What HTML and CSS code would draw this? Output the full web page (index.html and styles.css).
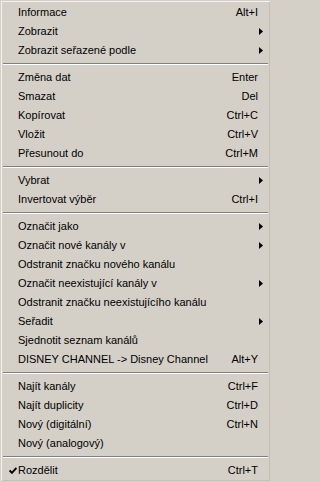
FILE: index.html
```
<!DOCTYPE html>
<html>
<head>
<meta charset="utf-8">
<link rel="stylesheet" href="styles.css">
</head>
<body>
<div class="menu">
  <div class="item"><span class="chk"></span><span class="label">Informace</span><span class="key">Alt+I</span><span class="sub"></span></div>
  <div class="item"><span class="chk"></span><span class="label">Zobrazit</span><span class="key"></span><span class="sub"><svg class="arrow" width="4" height="7" viewBox="0 0 4 7"><polygon points="0,0 4,3.5 0,7"/></svg></span></div>
  <div class="item"><span class="chk"></span><span class="label">Zobrazit seřazené podle</span><span class="key"></span><span class="sub"><svg class="arrow" width="4" height="7" viewBox="0 0 4 7"><polygon points="0,0 4,3.5 0,7"/></svg></span></div>
  <div class="sep"></div>
  <div class="item"><span class="chk"></span><span class="label">Změna dat</span><span class="key">Enter</span><span class="sub"></span></div>
  <div class="item"><span class="chk"></span><span class="label">Smazat</span><span class="key">Del</span><span class="sub"></span></div>
  <div class="item"><span class="chk"></span><span class="label">Kopírovat</span><span class="key">Ctrl+C</span><span class="sub"></span></div>
  <div class="item"><span class="chk"></span><span class="label">Vložit</span><span class="key">Ctrl+V</span><span class="sub"></span></div>
  <div class="item"><span class="chk"></span><span class="label">Přesunout do</span><span class="key">Ctrl+M</span><span class="sub"></span></div>
  <div class="sep"></div>
  <div class="item"><span class="chk"></span><span class="label">Vybrat</span><span class="key"></span><span class="sub"><svg class="arrow" width="4" height="7" viewBox="0 0 4 7"><polygon points="0,0 4,3.5 0,7"/></svg></span></div>
  <div class="item"><span class="chk"></span><span class="label">Invertovat výběr</span><span class="key">Ctrl+I</span><span class="sub"></span></div>
  <div class="sep"></div>
  <div class="item"><span class="chk"></span><span class="label">Označit jako</span><span class="key"></span><span class="sub"><svg class="arrow" width="4" height="7" viewBox="0 0 4 7"><polygon points="0,0 4,3.5 0,7"/></svg></span></div>
  <div class="item"><span class="chk"></span><span class="label">Označit nové kanály v</span><span class="key"></span><span class="sub"><svg class="arrow" width="4" height="7" viewBox="0 0 4 7"><polygon points="0,0 4,3.5 0,7"/></svg></span></div>
  <div class="item"><span class="chk"></span><span class="label">Odstranit značku nového kanálu</span><span class="key"></span><span class="sub"></span></div>
  <div class="item"><span class="chk"></span><span class="label">Označit neexistující kanály v</span><span class="key"></span><span class="sub"><svg class="arrow" width="4" height="7" viewBox="0 0 4 7"><polygon points="0,0 4,3.5 0,7"/></svg></span></div>
  <div class="item"><span class="chk"></span><span class="label">Odstranit značku neexistujícího kanálu</span><span class="key"></span><span class="sub"></span></div>
  <div class="item"><span class="chk"></span><span class="label">Seřadit</span><span class="key"></span><span class="sub"><svg class="arrow" width="4" height="7" viewBox="0 0 4 7"><polygon points="0,0 4,3.5 0,7"/></svg></span></div>
  <div class="item"><span class="chk"></span><span class="label">Sjednotit seznam kanálů</span><span class="key"></span><span class="sub"></span></div>
  <div class="item"><span class="chk"></span><span class="label">DISNEY CHANNEL -&gt; Disney Channel</span><span class="key">Alt+Y</span><span class="sub"></span></div>
  <div class="sep"></div>
  <div class="item"><span class="chk"></span><span class="label">Najít kanály</span><span class="key">Ctrl+F</span><span class="sub"></span></div>
  <div class="item"><span class="chk"></span><span class="label">Najít duplicity</span><span class="key">Ctrl+D</span><span class="sub"></span></div>
  <div class="item"><span class="chk"></span><span class="label">Nový (digitální)</span><span class="key">Ctrl+N</span><span class="sub"></span></div>
  <div class="item"><span class="chk"></span><span class="label">Nový (analogový)</span><span class="key"></span><span class="sub"></span></div>
  <div class="sep"></div>
  <div class="item"><span class="chk"><svg class="check" width="8" height="7" viewBox="0 0 8 7"><polyline points="0.6,3.4 2.9,5.8 7.4,0.9"/></svg></span><span class="label">Rozdělit</span><span class="key">Ctrl+T</span><span class="sub"></span></div>
</div>
</body>
</html>
```
FILE: styles.css
```
html, body {
  margin: 0;
  padding: 0;
  background: #d4d0c8;
}

.menu {
  box-sizing: border-box;
  width: 271px;
  height: 482px;
  padding: 2px;
  border: 1px solid #d4d0c8;
  box-shadow: inset 1px 1px 0 #f4f2ee, inset -1px -1px 0 #c4c0b8;
  background: #d4d0c8;
  font-family: "Liberation Sans", Arial, sans-serif;
  font-size: 11px;
  color: #000;
}

.item {
  display: flex;
  align-items: center;
  height: 19px;
  line-height: 19px;
  white-space: nowrap;
}

.chk {
  width: 15px;
  flex: none;
  display: flex;
  align-items: center;
}

.check {
  margin-left: 6px;
  fill: none;
  stroke: #000;
  stroke-width: 1.9;
}

.label {
  flex: 1;
}

.key {
  flex: none;
}

.sub {
  width: 10px;
  flex: none;
  display: flex;
  align-items: center;
}

.arrow {
  margin-left: 1px;
  fill: #000;
}

.sep {
  height: 8px;
  display: flex;
  flex-direction: column;
  justify-content: flex-start;
}

.sep::before {
  content: "";
  display: block;
  margin-top: 3px;
  height: 1px;
  background: #808080;
  border-bottom: 1px solid #fff;
}
```
